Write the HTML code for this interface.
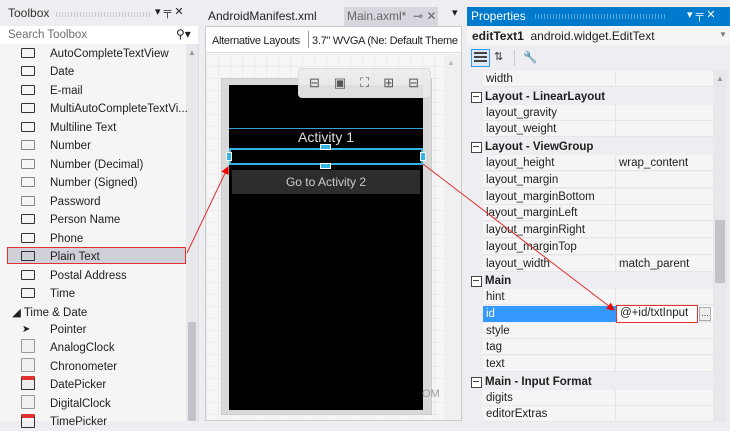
<!DOCTYPE html>
<html><head><style>
*{margin:0;padding:0;box-sizing:border-box}
body{width:730px;height:421px;overflow:hidden;background:#eeeef2;font-family:"Liberation Sans",sans-serif;font-size:11.5px;color:#1e1e1e;position:relative}
.a{position:absolute}
.ti{position:absolute;left:50px;height:18px;line-height:18px;white-space:nowrap;top:0;margin-top:1px}
.ic{position:absolute;left:21px;width:14px;height:10px;border:1.5px solid #333;border-radius:1px}
.pr{position:absolute;left:483px;width:230px;height:16px;line-height:17px;border-bottom:1px solid #e6e6e6;background:#f5f5f5}
.pr span{position:absolute;left:3px}
.pr i{position:absolute;left:132px;top:0;bottom:0;border-left:1px solid #e6e6e6}
.pr b{position:absolute;left:136px;font-weight:normal}
.cat{position:absolute;left:469px;width:244px;height:17px;line-height:18px;font-weight:bold;background:#eeeef2}
.cat:before{content:"";position:absolute;left:2px;top:4px;width:9px;height:9px;border:1px solid #444;background:#fff}
.cat:after{content:"";position:absolute;left:4px;top:8px;width:6px;height:1px;background:#444}
.cat span{position:absolute;left:16px}
</style></head><body>
<!-- Toolbox -->
<div class="a" style="left:8px;top:6px;font-size:12px;color:#333">Toolbox</div>
<div class="a" style="left:56px;top:12px;width:95px;height:5px;background:repeating-linear-gradient(90deg,#c8c8cc 0 1px,transparent 1px 3px)"></div>
<div class="a" style="left:155px;top:5px;font-size:11px">▾ ╤ ✕</div>
<div class="a" style="left:0;top:26px;width:198px;height:18px;background:#fff"></div>
<div class="a" style="left:8px;top:29px;color:#6d6d6d">Search Toolbox</div>
<div class="a" style="left:176px;top:27px;font-size:12px">⚲▾</div>
<div class="a" style="left:0;top:44px;width:186px;height:377px;background:#f5f5f5"></div>
<div class="a" style="left:186px;top:44px;width:12px;height:377px;background:#e8e8ec"></div>
<div class="a" style="left:188px;top:322px;width:8px;height:99px;background:#c2c3c9"></div>
<div class="a" style="left:188px;top:48px;color:#999;font-size:8px">▲</div>
<div class="a" style="left:198px;top:44px;width:7px;height:377px;background:#eeeef2;border-left:1px solid #ddd"></div>
<div class="a" style="left:7px;top:247px;width:179px;height:17px;background:#cfd0d8;border:1px solid #e03030"></div>
<div class="ic" style="top:48px"></div><div class="ti" style="top:44px">AutoCompleteTextView</div>
<div class="ic" style="top:66px"></div><div class="ti" style="top:62px">Date</div>
<div class="ic" style="top:85px"></div><div class="ti" style="top:81px">E-mail</div>
<div class="ic" style="top:103px"></div><div class="ti" style="top:99px">MultiAutoCompleteTextVi...</div>
<div class="ic" style="top:122px"></div><div class="ti" style="top:118px">Multiline Text</div>
<div class="ic" style="top:140px;border-color:#888"></div><div class="ti" style="top:136px">Number</div>
<div class="ic" style="top:159px;border-color:#888"></div><div class="ti" style="top:155px">Number (Decimal)</div>
<div class="ic" style="top:177px;border-color:#888"></div><div class="ti" style="top:173px">Number (Signed)</div>
<div class="ic" style="top:196px;border-color:#888"></div><div class="ti" style="top:192px">Password</div>
<div class="ic" style="top:214px"></div><div class="ti" style="top:210px">Person Name</div>
<div class="ic" style="top:233px"></div><div class="ti" style="top:229px">Phone</div>
<div class="ic" style="top:251px"></div><div class="ti" style="top:247px">Plain Text</div>
<div class="ic" style="top:270px"></div><div class="ti" style="top:266px">Postal Address</div>
<div class="ic" style="top:288px"></div><div class="ti" style="top:284px">Time</div>
<div class="ti" style="top:303px;left:12px">◢ Time &amp; Date</div>
<div class="ti" style="top:320px;left:22px;font-size:10px">➤</div><div class="ti" style="top:320px">Pointer</div>
<div class="ic" style="top:339px;height:14px;border:1px solid #999;background:#f0f0f0"></div><div class="ti" style="top:338px">AnalogClock</div>
<div class="ic" style="top:358px;height:14px;border:1px solid #999;background:#f0f0f0"></div><div class="ti" style="top:357px">Chronometer</div>
<div class="ic" style="top:376px;height:14px;border:1px solid #333;border-top:4px solid #e03030;background:#eee"></div><div class="ti" style="top:375px">DatePicker</div>
<div class="ic" style="top:395px;height:14px;border:1px solid #999;background:#f0f0f0"></div><div class="ti" style="top:394px">DigitalClock</div>
<div class="ic" style="top:414px;height:14px;border:1px solid #333;border-top:4px solid #e03030"></div><div class="ti" style="top:412px">TimePicker</div>

<!-- Middle -->
<div class="a" style="left:208px;top:9px;font-size:12px">AndroidManifest.xml</div>
<div class="a" style="left:344px;top:7px;width:94px;height:19px;background:#d6d7de"></div>
<div class="a" style="left:347px;top:9px;font-size:12px;color:#666">Main.axml* &nbsp;⊸ ✕</div>
<div class="a" style="left:452px;top:6px;font-size:11px">▾</div>
<div class="a" style="left:205px;top:26px;width:257px;height:395px;background:#fafafa;border:1px solid #ccc"></div>
<div class="a" style="left:206px;top:27px;width:255px;height:26px;background:#fff;border-bottom:1px solid #ddd"></div>
<div class="a" style="left:212px;top:35px;font-size:11px;letter-spacing:-0.3px;white-space:nowrap">Alternative Layouts</div>
<div class="a" style="left:308px;top:31px;width:1px;height:17px;background:#999"></div>
<div class="a" style="left:312px;top:35px;font-size:11px;letter-spacing:-0.3px;white-space:nowrap">3.7" WVGA (Ne: Default Theme</div>
<div class="a" style="left:206px;top:54px;width:238px;height:366px;background-color:#f6f6f6;background-image:linear-gradient(#ececec 1px,transparent 1px),linear-gradient(90deg,#ececec 1px,transparent 1px);background-size:12px 12px"></div>
<div class="a" style="left:444px;top:54px;width:17px;height:366px;background:#f0f0f0"></div>
<div class="a" style="left:447px;top:58px;color:#bbb;font-size:8px">▲</div>
<div class="a" style="left:221px;top:78px;width:211px;height:337px;background:#d9d9d9;border:1px solid #ccc"></div>
<div class="a" style="left:229px;top:85px;width:194px;height:325px;background:#000"></div>
<div class="a" style="left:229px;top:128px;width:194px;height:1px;background:#33a0d8"></div>
<div class="a" style="left:229px;top:129px;width:194px;text-align:center;color:#ddd;font-size:14px">Activity 1</div>
<div class="a" style="left:229px;top:148px;width:194px;height:17px;border:2px solid #33b5e5"></div>
<div class="a" style="left:226px;top:152px;width:6px;height:9px;background:#33b5e5;border:1px solid #fff"></div>
<div class="a" style="left:420px;top:152px;width:6px;height:9px;background:#33b5e5;border:1px solid #fff"></div>
<div class="a" style="left:320px;top:144px;width:11px;height:6px;background:#33b5e5;border:1px solid #fff"></div>
<div class="a" style="left:320px;top:163px;width:11px;height:6px;background:#33b5e5;border:1px solid #fff"></div>
<div class="a" style="left:232px;top:170px;width:188px;height:24px;background:#2d2d2d;color:#ccc;text-align:center;line-height:24px;font-size:12px">Go to Activity 2</div>
<div class="a" style="left:298px;top:68px;width:133px;height:30px;background:rgba(235,235,235,.95);border:1px solid #ddd;border-radius:4px;font-size:13px;color:#555;letter-spacing:14px;padding:6px 0 0 10px;white-space:nowrap">⊟▣⛶⊞⊟</div>
<div class="a" style="left:422px;top:388px;color:#999;font-size:11px">OM</div>

<!-- Properties -->
<div class="a" style="left:467px;top:7px;width:263px;height:19px;background:#007acc"></div>
<div class="a" style="left:471px;top:9px;color:#fff;font-size:12px">Properties</div>
<div class="a" style="left:535px;top:14px;width:130px;height:5px;background:repeating-linear-gradient(90deg,#5aa7db 0 1px,transparent 1px 3px)"></div>
<div class="a" style="left:687px;top:8px;color:#fff;font-size:11px">▾ ╤ ✕</div>
<div class="a" style="left:467px;top:26px;width:263px;height:19px;background:#f5f5f5"></div>
<div class="a" style="left:472px;top:29px;font-size:12px"><b>editText1</b>&nbsp; android.widget.EditText</div>
<div class="a" style="left:719px;top:30px;font-size:8px;color:#777">▼</div>
<div class="a" style="left:471px;top:49px;width:19px;height:18px;border:1px solid #3399ff;background:#dbe8f7"></div>
<div class="a" style="left:474px;top:52px;width:13px;height:12px;background:repeating-linear-gradient(#444 0 2px,transparent 2px 4px)"></div>
<div class="a" style="left:494px;top:50px;font-size:11px;color:#333">⇅</div>
<div class="a" style="left:514px;top:50px;width:1px;height:16px;background:#ccc"></div>
<div class="a" style="left:523px;top:50px;color:#bbb">🔧</div>
<div class="a" style="left:467px;top:70px;width:263px;height:351px;background:#eeeef2"></div>
<div class="a" style="left:713px;top:70px;width:14px;height:351px;background:#e8e8ec"></div>
<div class="a" style="left:715px;top:220px;width:10px;height:63px;background:#c2c3c9"></div>
<div class="a" style="left:716px;top:74px;color:#999;font-size:8px">▲</div>
<div class="pr" style="top:71px"><span>width</span><i></i></div>
<div class="cat" style="top:88px"><span>Layout - LinearLayout</span></div>
<div class="pr" style="top:105px"><span>layout_gravity</span><i></i></div>
<div class="pr" style="top:121px"><span>layout_weight</span><i></i></div>
<div class="cat" style="top:138px"><span>Layout - ViewGroup</span></div>
<div class="pr" style="top:155px"><span>layout_height</span><i></i><b>wrap_content</b></div>
<div class="pr" style="top:172px"><span>layout_margin</span><i></i></div>
<div class="pr" style="top:189px"><span>layout_marginBottom</span><i></i></div>
<div class="pr" style="top:205px"><span>layout_marginLeft</span><i></i></div>
<div class="pr" style="top:222px"><span>layout_marginRight</span><i></i></div>
<div class="pr" style="top:239px"><span>layout_marginTop</span><i></i></div>
<div class="pr" style="top:256px"><span>layout_width</span><i></i><b>match_parent</b></div>
<div class="cat" style="top:272px"><span>Main</span></div>
<div class="pr" style="top:289px"><span>hint</span><i></i></div>
<div class="pr" style="top:306px;background:#fff"><span>id</span></div>
<div class="a" style="left:483px;top:306px;width:133px;height:16px;background:#3399ff;color:#fff;line-height:17px;padding-left:3px">id</div>
<div class="a" style="left:616px;top:305px;width:82px;height:18px;border:1.5px solid #e03030;background:#fff;line-height:15px;padding-left:3px">@+id/txtInput</div>
<div class="a" style="left:699px;top:307px;width:12px;height:14px;border:1px solid #aaa;background:#eee;font-size:9px;text-align:center;line-height:10px">...</div>
<div class="pr" style="top:323px"><span>style</span><i></i></div>
<div class="pr" style="top:339px"><span>tag</span><i></i></div>
<div class="pr" style="top:356px"><span>text</span><i></i></div>
<div class="cat" style="top:373px"><span>Main - Input Format</span></div>
<div class="pr" style="top:390px"><span>digits</span><i></i></div>
<div class="pr" style="top:406px"><span>editorExtras</span><i></i></div>

<!-- Arrows -->
<svg class="a" style="left:0;top:0" width="730" height="421">
<defs><marker id="m" markerWidth="8" markerHeight="8" refX="7" refY="4" orient="auto"><path d="M0,0 L8,4 L0,8z" fill="#e00"/></marker></defs>
<line x1="187" y1="253" x2="228" y2="167" stroke="#e03030" stroke-width="1" marker-end="url(#m)"/>
<line x1="423" y1="164" x2="614" y2="310" stroke="#e03030" stroke-width="1" marker-end="url(#m)"/>
</svg>
</body></html>
